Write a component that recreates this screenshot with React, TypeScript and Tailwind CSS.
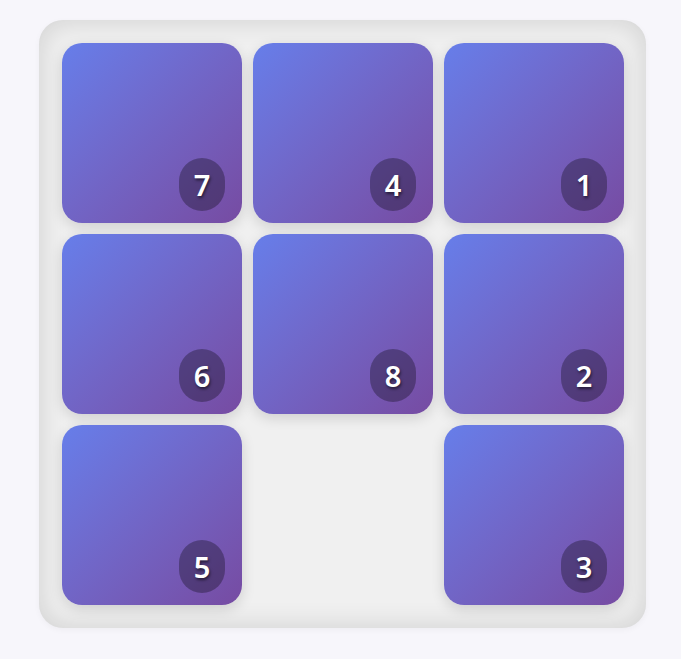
const tiles: (number | null)[] = [7, 4, 1, 6, 8, 2, 5, null, 3];

export default function App() {
  return (
    <div className="min-h-[659px] w-full bg-[#f7f6fb] pt-5 flex justify-center" style={{ fontFamily: '"Noto Sans", "Open Sans", sans-serif' }}>
      <div className="ml-[4px] h-[608px] w-[607px] rounded-[24px] bg-[#f0f0f0] p-[23px] shadow-[inset_0_0_28px_rgba(0,0,0,0.14),0_2px_6px_rgba(0,0,0,0.04)]">
        <div className="grid grid-cols-3 gap-x-[12px] gap-y-[11px]">
          {tiles.map((n, i) =>
            n === null ? (
              <div key={i} className="h-[180px] w-[180px]" />
            ) : (
              <div
                key={i}
                className="relative h-[180px] w-[180px] rounded-[20px] bg-gradient-to-br from-[#667eea] to-[#764ba2] shadow-[0_4px_14px_rgba(0,0,0,0.14)]"
              >
                <div className="absolute bottom-[12px] right-[17px] flex h-[53px] w-[46px] items-center justify-center rounded-full bg-black/30">
                  <span className="text-[29px] font-semibold leading-none text-white [text-shadow:1px_2px_3px_rgba(0,0,0,0.55)]">
                    {n}
                  </span>
                </div>
              </div>
            )
          )}
        </div>
      </div>
    </div>
  );
}
